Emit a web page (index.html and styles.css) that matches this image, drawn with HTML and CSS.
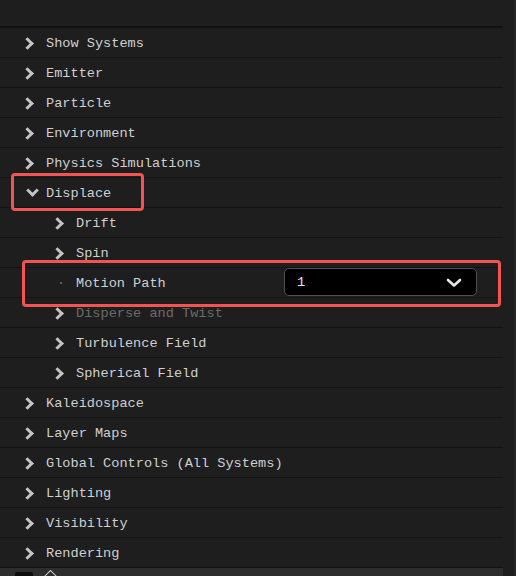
FILE: index.html
```html
<!DOCTYPE html>
<html lang="en">
<head>
    <meta charset="UTF-8">
    <title>Effect Controls</title>
    <link rel="stylesheet" href="styles.css">
</head>
<body>
    <div class="panel">
        <div class="panel-main">
            <div class="panel-head"></div>
            <ul class="tree">
                <li class="row"><span class="twisty"></span>Show Systems</li>
                <li class="row"><span class="twisty"></span>Emitter</li>
                <li class="row"><span class="twisty"></span>Particle</li>
                <li class="row"><span class="twisty"></span>Environment</li>
                <li class="row"><span class="twisty"></span>Physics Simulations</li>
                <li class="row"><span class="twisty open"></span>Displace<span class="mark mark-group"></span></li>
                <li class="row sub"><span class="twisty"></span>Drift</li>
                <li class="row sub"><span class="twisty"></span>Spin</li>
                <li class="row sub">
                    <span class="dot"></span>Motion Path
                    <div class="select">
                        <span class="select-value">1</span>
                        <svg class="select-arrow" width="16" height="10" viewBox="0 0 16 10"><path d="M2 2 L8 7.5 L14 2" fill="none" stroke="#e8e8e8" stroke-width="2.6" stroke-linecap="round" stroke-linejoin="round"/></svg>
                    </div>
                    <span class="mark mark-param"></span>
                </li>
                <li class="row sub dim"><span class="twisty"></span>Disperse and Twist</li>
                <li class="row sub"><span class="twisty"></span>Turbulence Field</li>
                <li class="row sub"><span class="twisty"></span>Spherical Field</li>
                <li class="row"><span class="twisty"></span>Kaleidospace</li>
                <li class="row"><span class="twisty"></span>Layer Maps</li>
                <li class="row"><span class="twisty"></span>Global Controls (All Systems)</li>
                <li class="row"><span class="twisty"></span>Lighting</li>
                <li class="row"><span class="twisty"></span>Visibility</li>
                <li class="row"><span class="twisty"></span>Rendering</li>
            </ul>
            <div class="panel-foot">
                <span class="foot-swatch"></span>
                <span class="foot-icon"></span>
            </div>
        </div>
        <div class="scroll-gutter"></div>
    </div>
</body>
</html>
```

FILE: styles.css
```css
html, body {
    margin: 0;
    padding: 0;
    background: #1e1e1e;
}
body {
    width: 516px;
    height: 576px;
    overflow: hidden;
    font-family: 'Liberation Mono', 'DejaVu Sans Mono', monospace;
    font-size: 13.6px;
    color: #cfd0d2;
}
.panel {
    display: flex;
    height: 100%;
}
.panel-main {
    width: 503px;
    display: flex;
    flex-direction: column;
}
.scroll-gutter {
    flex: 1;
    background: #1e1e1e;
    border-right: 2px solid #262626;
}
.panel-head {
    height: 26px;
    border-bottom: 2px solid #121212;
}
.tree {
    list-style: none;
    margin: 0;
    padding: 0;
}
.row {
    position: relative;
    height: 29px;
    box-sizing: border-box;
    height: 30px;
    padding-top: 1px;
    border-bottom: 1px solid #131313;
    display: flex;
    align-items: center;
    padding-left: 24px;
    white-space: nowrap;
}
.row.sub {
    padding-left: 54px;
}
.row.dim {
    color: #6b6b6b;
}
.twisty {
    width: 12px;
    height: 14px;
    margin-right: 10px;
    position: relative;
}
.twisty::before {
    content: "";
    position: absolute;
    left: -1px;
    top: 3px;
    width: 6px;
    height: 6px;
    border-right: 3px solid #c4c4c4;
    border-bottom: 3px solid #c4c4c4;
    transform: rotate(-45deg);
}
.twisty.open::before {
    left: 4px;
    top: 0;
    transform: rotate(45deg);
}
.dot {
    width: 2px;
    height: 2px;
    background: #5a5a5a;
    margin: 0 14px 0 6px;
}
.select {
    position: absolute;
    left: 284px;
    top: 0;
    width: 193px;
    height: 28px;
    background: #000;
    border: 1px solid #505050;
    border-radius: 5px;
    display: flex;
    align-items: center;
    justify-content: space-between;
    padding: 1px 14px 0 12px;
    box-sizing: border-box;
}
.select-value {
    color: #e6e6e6;
}
.select-arrow {
    display: block;
}
.mark {
    position: absolute;
    border: 3px solid #f25454;
    border-radius: 4px;
    pointer-events: none;
}
.mark-group {
    left: 11px;
    top: -5px;
    width: 127px;
    height: 32px;
}
.mark-param {
    left: 22px;
    top: -8px;
    width: 473px;
    height: 41px;
}
.panel-foot {
    flex: 1;
    background: #2d2d2d;
    display: flex;
    align-items: flex-end;
    padding-left: 15px;
    gap: 12px;
    overflow: hidden;
}
.foot-swatch {
    width: 18px;
    height: 4px;
    background: #0c0c0c;
    border-radius: 2px 2px 0 0;
}
.foot-icon {
    width: 9px;
    height: 9px;
    border: 1.5px solid #cfcfcf;
    transform: rotate(45deg);
    margin-bottom: -7px;
}
```
